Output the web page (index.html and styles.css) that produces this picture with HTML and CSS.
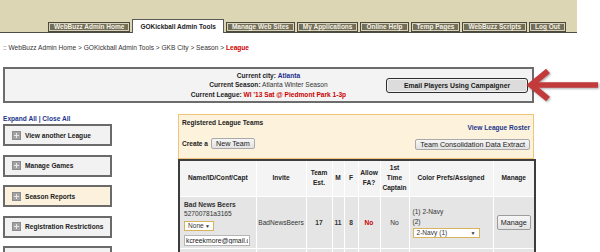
FILE: index.html
```html
<!DOCTYPE html>
<html lang="en">
<head>
    <meta charset="UTF-8">
    <title>GOKickball Admin Tools - League</title>
    <link rel="stylesheet" href="styles.css">
</head>
<body>
    <div class="header">
        <ul class="tabs">
            <li>WebBuzz Admin Home</li>
            <li class="active">GOKickball Admin Tools</li>
            <li>Manage Web Sites</li>
            <li>My Applications</li>
            <li>Online Help</li>
            <li>Temp Pages</li>
            <li>WebBuzz Scripts</li>
            <li>Log Out</li>
        </ul>
    </div>

    <div class="crumbs">
        :: WebBuzz Admin Home &gt; GOKickball Admin Tools &gt; GKB City &gt; Season &gt; <span class="crumb-here">League</span>
    </div>

    <div class="current">
        <div class="current-text">
            <div><b>Current city:</b> <span class="city">Atlanta</span></div>
            <div><b>Current Season:</b> Atlanta Winter Season</div>
            <div><b>Current League:</b> <span class="league">WI '13 Sat @ Piedmont Park 1-3p</span></div>
        </div>
        <button class="btn-email">Email Players Using Campaigner</button>
    </div>

    <svg class="arrow" width="74" height="38" viewBox="0 0 74 38">
        <line x1="73" y1="19" x2="8" y2="19" stroke="#c33a3a" stroke-width="5.5"/>
        <polyline points="23,5 6,19 23,33" fill="none" stroke="#c33a3a" stroke-width="6" stroke-linejoin="miter"/>
    </svg>

    <div class="main">
        <div class="side">
            <div class="expand"><a href="#">Expand All</a> | <a href="#">Close All</a></div>
            <div class="acc"><span class="plus"></span>View another League</div>
            <div class="acc"><span class="plus"></span>Manage Games</div>
            <div class="acc acc-open"><span class="plus"></span>Season Reports</div>
            <div class="acc"><span class="plus"></span>Registration Restrictions</div>
            <div class="acc"></div>
        </div>

        <div class="teams">
            <div class="teams-head">
                <div class="teams-left">
                    <div class="teams-title">Registered League Teams</div>
                    <div class="create">Create a <button class="btn">New Team</button></div>
                </div>
                <div class="teams-right">
                    <a href="#" class="roster">View League Roster</a>
                    <button class="btn">Team Consolidation Data Extract</button>
                </div>
            </div>

            <table class="grid">
                <colgroup>
                    <col style="width:77px"><col style="width:50px"><col style="width:26px">
                    <col style="width:12px"><col style="width:14px"><col style="width:22px">
                    <col style="width:29px"><col style="width:84px"><col style="width:42px">
                </colgroup>
                <tr>
                    <th>Name/ID/Conf/Capt</th>
                    <th>Invite</th>
                    <th>Team Est.</th>
                    <th>M</th>
                    <th>F</th>
                    <th>Allow FA?</th>
                    <th>1st<br>Time<br>Captain</th>
                    <th>Color Prefs/Assigned</th>
                    <th>Manage</th>
                </tr>
                <tr>
                    <td class="name">
                        <b>Bad News Beers</b><br>
                        52700781a3165<br>
                        <span class="sel sel-none">None <span class="caret">&#9660;</span></span>
                        <input class="email" type="text" value="kcreekmore@gmail.com">
                    </td>
                    <td>BadNewsBeers</td>
                    <td class="num">17</td>
                    <td class="num">11</td>
                    <td class="num">8</td>
                    <td class="num no">No</td>
                    <td>No</td>
                    <td class="colors">
                        (1) 2-Navy<br>
                        (2)<br>
                        <span class="sel sel-navy">2-Navy (1) <span class="caret">&#9660;</span></span>
                    </td>
                    <td><button class="btn btn-manage">Manage</button></td>
                </tr>
                <tr class="row-next">
                    <td></td><td></td><td></td><td></td><td></td><td></td><td></td><td></td><td></td>
                </tr>
            </table>
        </div>
    </div>
</body>
</html>
```

FILE: styles.css
```css
* {
    margin: 0;
    padding: 0;
    box-sizing: border-box;
}

body {
    font-family: "Liberation Sans", Arial, sans-serif;
    font-size: 6.6px;
    color: #222;
    background: #fff;
    width: 600px;
    height: 252px;
    overflow: hidden;
    position: relative;
}

a {
    color: #22368c;
    text-decoration: none;
    font-weight: bold;
}

.header {
    width: 577px;
    height: 33px;
    background: #dcd6b4;
    border-bottom: 1px solid #4d4b42;
}

.tabs {
    list-style: none;
    display: flex;
    align-items: flex-end;
    height: 32px;
    padding-left: 48px;
    gap: 2px;
}

.tabs li {
    height: 10px;
    line-height: 8px;
    padding: 0 5px;
    background: #736e58;
    color: #f4f1e4;
    font-size: 6.5px;
    font-weight: bold;
    border: 1px solid #4d4a3c;
    box-shadow: inset 0 0 0 1px #d6d1bb;
    white-space: nowrap;
}

.tabs li.active {
    height: 14px;
    line-height: 13px;
    padding: 0 7px;
    background: #fff;
    color: #222;
    border-color: #5a5a5a;
    border-bottom: none;
    box-shadow: none;
    margin-bottom: -1px;
}

.crumbs {
    height: 34px;
    padding: 10px 3px 0;
    line-height: 9px;
    color: #333;
}

.crumb-here {
    color: #cc0000;
    font-weight: bold;
}

.current {
    margin-left: 3px;
    width: 531px;
    height: 36px;
    border: 2px solid #6c6c6c;
    background: #f3f3f3;
    display: grid;
    grid-template-columns: 1fr auto 1fr;
    align-items: center;
}

.current-text {
    grid-column: 2;
    text-align: center;
    line-height: 9.5px;
    color: #333;
}

.current-text b {
    color: #1e1e1e;
}

.city {
    color: #1f2f8f;
    font-weight: bold;
}

.league {
    color: #cc0000;
    font-weight: bold;
}

.btn-email {
    grid-column: 3;
    justify-self: end;
    margin-right: 4px;
    width: 142px;
    height: 15px;
    border: 1px solid #2e2e2e;
    border-radius: 3px;
    background: #dcdcdc;
    box-shadow: inset 0 0 0 1px #f2f2f2;
    font-family: inherit;
    font-size: 6.8px;
    font-weight: bold;
    color: #1a1a1a;
}

.arrow {
    position: absolute;
    left: 525px;
    top: 66px;
    filter: drop-shadow(1px 1px 1px rgba(0,0,0,0.35));
}

.main {
    display: flex;
    width: 534px;
    padding-left: 3px;
    margin-top: 11px;
}

.side {
    width: 109px;
}

.expand {
    height: 10px;
    line-height: 9px;
    color: #22368c;
    font-weight: bold;
}

.acc {
    height: 22px;
    margin-bottom: 8.5px;
    border: 2px solid #6a6a6a;
    background: #f2f2f2;
    display: flex;
    align-items: center;
    gap: 4px;
    padding-left: 7px;
    font-weight: bold;
    color: #222;
    white-space: nowrap;
}

.acc-open {
    background: #fbf1dc;
}

.plus {
    width: 9px;
    height: 9px;
    background: #a3a3a3;
    border: 1px solid #8c8c8c;
    position: relative;
    flex: none;
}

.plus::before,
.plus::after {
    content: "";
    position: absolute;
    background: #e8e8e8;
}

.plus::before {
    left: 1px;
    right: 1px;
    top: 3px;
    height: 1px;
}

.plus::after {
    top: 1px;
    bottom: 1px;
    left: 3px;
    width: 1px;
}

.teams {
    margin-left: auto;
    width: 356px;
}

.teams-head {
    height: 45px;
    border: 1px solid #f0c57a;
    background: #fdf3dd;
    display: flex;
    justify-content: space-between;
    padding: 3px 3px 0 3px;
}

.teams-title {
    line-height: 9px;
    font-weight: bold;
}

.create {
    margin-top: 11px;
    display: flex;
    align-items: center;
    gap: 3px;
    font-weight: bold;
}

.teams-right {
    display: flex;
    flex-direction: column;
    align-items: flex-end;
    padding-top: 5px;
}

.roster {
    line-height: 9px;
}

.teams-right .btn {
    margin-top: 7px;
}

.btn {
    height: 11px;
    padding: 0 4px;
    border: 1px solid #a9a9a9;
    border-radius: 2px;
    background: linear-gradient(#f6f6f6, #e2e2e2);
    font-family: inherit;
    font-size: 7.2px;
    color: #222;
    line-height: 9px;
}

.grid {
    width: 356px;
    table-layout: fixed;
    border-collapse: collapse;
    border-top: 2px solid #3d3d3d;
    border-left: 2px solid #3d3d3d;
    border-right: 2px solid #3d3d3d;
}

.grid th {
    height: 36px;
    background: #f4f4f4;
    border: 1px solid #fff;
    border-top: none;
    font-weight: bold;
    line-height: 10px;
    color: #222;
}

.grid td {
    height: 52px;
    background: #e5e5e5;
    border: 1px solid #fff;
    text-align: center;
    vertical-align: middle;
    color: #333;
}

.grid td.name {
    text-align: left;
    vertical-align: top;
    padding: 3px 0 0 4px;
    line-height: 9.5px;
}

.grid td.num {
    font-weight: bold;
}

.grid td.no {
    color: #cc0000;
}

.grid td.colors {
    text-align: left;
    padding-left: 3px;
    line-height: 10px;
}

.grid .row-next td {
    height: 20px;
}

.sel {
    display: inline-flex;
    align-items: center;
    justify-content: space-between;
    height: 10px;
    border: 1px solid #d9b35c;
    background: #fff;
    padding: 0 3px;
    line-height: 8px;
    vertical-align: top;
}

.sel-none {
    width: 30px;
    margin-top: 2px;
}

.sel-navy {
    width: 67px;
    margin-top: 1px;
}

.caret {
    font-size: 5px;
}

.email {
    display: block;
    width: 66px;
    height: 11px;
    margin-top: 4px;
    border: 1px solid #b5b5b5;
    padding: 0 1px;
    font-family: inherit;
    font-size: 6.8px;
    color: #222;
    background: #fff;
}

.btn-manage {
    height: 15px;
    width: 34px;
    padding: 0;
    border-color: #9c9c9c;
    font-size: 7.2px;
}
```
